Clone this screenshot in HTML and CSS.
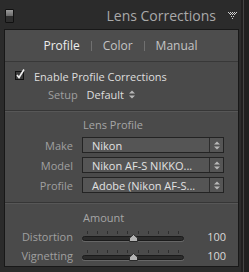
FILE: index.html
```html
<!DOCTYPE html>
<html lang="en">
<head>
  <meta charset="UTF-8">
  <title>Lens Corrections</title>
  <link rel="stylesheet" href="styles.css">
</head>
<body>
  <div class="frame">
    <div class="main">
      <div class="header">
        <div class="toggle"><span class="toggle-on"></span></div>
        <div class="title">Lens Corrections</div>
        <svg class="collapse" width="10" height="9" viewBox="0 0 10 9">
          <g fill="#d0d0d0">
            <rect x="0" y="0" width="1" height="1"/><rect x="2" y="0" width="1" height="1"/><rect x="4" y="0" width="1" height="1"/><rect x="6" y="0" width="1" height="1"/><rect x="8" y="0" width="1" height="1"/>
            <rect x="1" y="1" width="1" height="1"/><rect x="3" y="1" width="1" height="1"/><rect x="5" y="1" width="1" height="1"/><rect x="7" y="1" width="1" height="1"/>
            <rect x="2" y="2" width="1" height="1"/><rect x="4" y="2" width="1" height="1"/><rect x="6" y="2" width="1" height="1"/>
            <rect x="3" y="4" width="1" height="1"/><rect x="5" y="4" width="1" height="1"/>
            <rect x="4" y="6" width="1" height="1"/>
          </g>
        </svg>
      </div>

      <div class="panel">
        <div class="tabs">
          <span class="tab active">Profile</span>
          <span class="sep"></span>
          <span class="tab">Color</span>
          <span class="sep"></span>
          <span class="tab">Manual</span>
        </div>

        <div class="section first">
          <div class="check-row">
            <svg class="checkbox" width="12" height="12" viewBox="0 0 12 12">
              <rect x="1.5" y="3.5" width="8" height="8" fill="#3c3c3c" stroke="#111"/>
              <path d="M3 7 L5 9.5 L10 1.5" fill="none" stroke="#f0f0f0" stroke-width="1.6"/>
            </svg>
            <span class="check-label">Enable Profile Corrections</span>
          </div>
          <div class="setup-row">
            <span class="setup-label">Setup</span>
            <span class="value">Default</span>
            <svg class="updown" width="6" height="9" viewBox="0 0 6 9">
              <path d="M0 3.5 L3 0.5 L6 3.5Z M0 5.5 L3 8.5 L6 5.5Z" fill="#b8b8b8"/>
            </svg>
          </div>
        </div>

        <div class="section">
          <div class="section-title">Lens Profile</div>
          <div class="field">
            <span class="label">Make</span>
            <div class="select"><span class="select-text">Nikon</span><span class="select-btn"><svg width="6" height="9" viewBox="0 0 6 9"><path d="M0 3.5 L3 0.5 L6 3.5Z M0 5.5 L3 8.5 L6 5.5Z" fill="#b8b8b8"/></svg></span></div>
          </div>
          <div class="field">
            <span class="label">Model</span>
            <div class="select"><span class="select-text">Nikon AF-S NIKKO...</span><span class="select-btn"><svg width="6" height="9" viewBox="0 0 6 9"><path d="M0 3.5 L3 0.5 L6 3.5Z M0 5.5 L3 8.5 L6 5.5Z" fill="#b8b8b8"/></svg></span></div>
          </div>
          <div class="field">
            <span class="label">Profile</span>
            <div class="select"><span class="select-text">Adobe (Nikon AF-S...</span><span class="select-btn"><svg width="6" height="9" viewBox="0 0 6 9"><path d="M0 3.5 L3 0.5 L6 3.5Z M0 5.5 L3 8.5 L6 5.5Z" fill="#b8b8b8"/></svg></span></div>
          </div>
        </div>

        <div class="section last">
          <div class="section-title amount">Amount</div>
          <div class="slider-row">
            <span class="label">Distortion</span>
            <div class="slider">
              <div class="ticks"><i></i><i></i><i></i><i></i><i></i><i></i><i></i><i></i><i></i><i></i></div>
              <div class="track"></div>
              <svg class="thumb" style="left: 47px" width="9" height="8" viewBox="0 0 9 8"><path d="M4.5 0.5 L8.5 4 L8.5 7.5 L0.5 7.5 L0.5 4Z" fill="#b4b4b4" stroke="#2a2a2a"/></svg>
            </div>
            <span class="num">100</span>
          </div>
          <div class="slider-row">
            <span class="label">Vignetting</span>
            <div class="slider">
              <div class="ticks"><i></i><i></i><i></i><i></i><i></i><i></i><i></i><i></i><i></i><i></i></div>
              <div class="track"></div>
              <svg class="thumb" style="left: 47px" width="9" height="8" viewBox="0 0 9 8"><path d="M4.5 0.5 L8.5 4 L8.5 7.5 L0.5 7.5 L0.5 4Z" fill="#b4b4b4" stroke="#2a2a2a"/></svg>
            </div>
            <span class="num">100</span>
          </div>
        </div>
      </div>
    </div>
    <div class="scroll"><span class="scroll-line"></span></div>
  </div>
</body>
</html>
```

FILE: styles.css
```css
html, body {
  margin: 0;
  padding: 0;
  background: #2b2b2b;
}
body {
  font-family: "Open Sans", "Liberation Sans", sans-serif;
  font-size: 11px;
  color: #a6a6a6;
  width: 249px;
  height: 272px;
  overflow: hidden;
}
.frame {
  display: flex;
  height: 272px;
}
.main {
  width: 241px;
}
.scroll {
  flex: 1;
  background: #1f1f1f;
  display: flex;
  padding-left: 2px;
}
.scroll-line {
  width: 1px;
  background: #444;
}
.header {
  height: 29px;
  display: flex;
  align-items: center;
  padding-left: 5px;
  box-sizing: border-box;
}
.toggle {
  width: 7px;
  height: 12px;
  border: 1px solid #111;
  background: #2e2e2e;
  border-radius: 1px;
  margin-top: 3px;
}
.toggle-on {
  display: block;
  height: 6px;
  background: linear-gradient(#9a9a9a, #6a6a6a);
}
.title {
  flex: 1;
  text-align: right;
  font-size: 14px;
  color: #a9a9a9;
  padding-right: 12px;
  margin-top: 2px;
}
.collapse {
  margin-right: 3px;
  margin-top: 4px;
}
.panel {
  margin-left: 4px;
  width: 235px;
  border: 1px solid #181818;
  background: #4a4a4a;
  box-sizing: border-box;
  height: 238px;
}
.tabs {
  height: 31px;
  background: #4d4d4d;
  border-bottom: 1px solid #383838;
  display: flex;
  align-items: center;
  justify-content: center;
  gap: 11px;
  padding-right: 2px;
}
.tab {
  font-size: 12px;
  color: #c4c4c4;
}
.tab.active {
  color: #eeeeee;
}
.sep {
  width: 1px;
  height: 10px;
  background: #707070;
}
.section {
  border-bottom: 1px solid #363636;
  box-shadow: 0 1px 0 #575757;
  padding: 5px 0 5px;
}
.section.first {
  padding-bottom: 7px;
}
.section.last {
  border-bottom: none;
  box-shadow: none;
  padding-top: 6px;
}
.check-row {
  height: 18px;
  display: flex;
  align-items: center;
  padding-left: 9px;
}
.checkbox {
  margin-top: -4px;
}
.check-label {
  margin-left: 8px;
  color: #dedede;
}
.setup-row {
  height: 18px;
  display: flex;
  align-items: center;
  padding-left: 43px;
}
.setup-label {
  color: #a0a0a0;
}
.setup-row .value {
  margin-left: 9px;
  color: #dedede;
}
.updown {
  margin-left: 5px;
}
.section-title {
  height: 18px;
  line-height: 18px;
  padding-left: 78px;
  color: #a6a6a6;
  margin-bottom: 3px;
}
.section-title.amount {
  margin-bottom: 0;
}
.field {
  display: flex;
  align-items: center;
  height: 16px;
  margin-bottom: 4px;
}
.label {
  width: 68px;
  text-align: right;
  color: #a0a0a0;
  flex-shrink: 0;
}
.field .select {
  margin-left: 9px;
}
.select {
  width: 142px;
  height: 16px;
  box-sizing: border-box;
  border: 1px solid #232323;
  background: #555555;
  display: flex;
  align-items: center;
}
.select-text {
  flex: 1;
  padding-left: 9px;
  color: #e2e2e2;
  white-space: nowrap;
  overflow: hidden;
}
.select-btn {
  width: 13px;
  height: 14px;
  border-left: 1px solid #2c2c2c;
  display: flex;
  align-items: center;
  justify-content: center;
}
.slider-row {
  display: flex;
  align-items: center;
  height: 18px;
  margin-bottom: 1px;
}
.slider {
  position: relative;
  width: 102px;
  height: 14px;
  margin-left: 9px;
}
.ticks {
  position: absolute;
  left: 5px;
  right: 5px;
  top: 2px;
  display: flex;
  justify-content: space-between;
}
.ticks i {
  width: 1px;
  height: 3px;
  background: #2e2e2e;
}
.track {
  position: absolute;
  left: 0;
  right: 0;
  top: 7px;
  height: 3px;
  background: #2c2c2c;
  border: 1px solid #1b1b1b;
  border-radius: 3px;
  box-shadow: 0 1px 0 #666;
}
.thumb {
  position: absolute;
  top: 5px;
}
.num {
  margin-left: auto;
  margin-right: 12px;
  color: #d8d8d8;
}
```
